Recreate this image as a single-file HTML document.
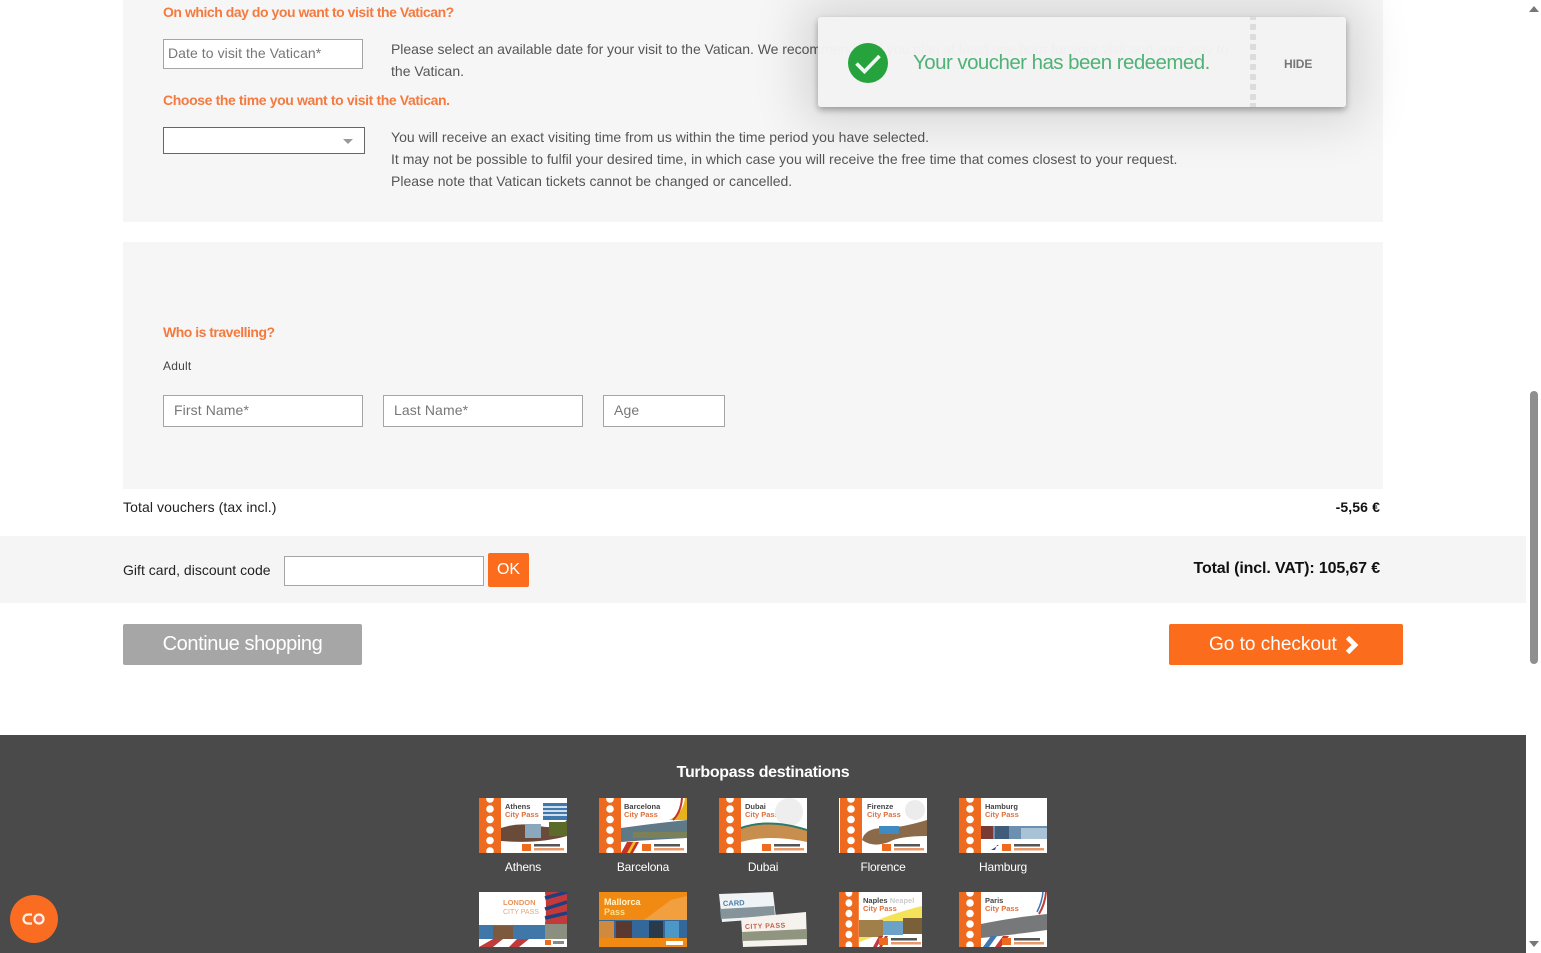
<!DOCTYPE html>
<html lang="en">
<head>
<meta charset="utf-8">
<title>Cart</title>
<style>
html,body{margin:0;padding:0;width:1541px;height:953px;overflow:hidden;background:#fff}
body{position:relative;font-family:"Liberation Sans",sans-serif;font-size:14px;color:#555}
.a{position:absolute;white-space:nowrap}
.panel{position:absolute;left:123px;width:1260px;background:#f6f6f6}
.h{font-weight:bold;color:#f47a3f;font-size:14px;letter-spacing:-.42px;line-height:16px;left:163px}
.t{left:391px;font-size:14px;letter-spacing:.01px;line-height:18px;color:#555}
.inp{position:absolute;box-sizing:border-box;background:#fff;border:1px solid #a5a5a5;color:#777;white-space:nowrap;letter-spacing:.1px}
.btn{position:absolute;box-sizing:border-box;border-radius:2px;color:#fff;text-align:center;white-space:nowrap}
.th{position:absolute;width:88px;height:55px;background:#fff;overflow:hidden}
.th svg{position:absolute;left:0;top:0;width:88px;height:55px}
.cap{position:absolute;width:120px;text-align:center;color:#fff;font-size:12px;line-height:14px;letter-spacing:-.2px}
</style>
</head>
<body>
<div class="panel" style="top:0;height:222px"></div>
<div class="panel" style="top:242px;height:247px"></div>

<div class="a h" style="top:4px;letter-spacing:-.46px">On which day do you want to visit the Vatican?</div>
<div class="inp" style="left:163px;top:39px;width:200px;height:30px;padding:4px 4px;line-height:18px;letter-spacing:.07px">Date to visit the Vatican*</div>
<div class="a t" style="top:40px;letter-spacing:-.03px">Please select an available date for your visit to the Vatican. We recommend that you plan at least one hour for your visit and your way to</div>
<div class="a t" style="top:62px">the Vatican.</div>

<div class="a h" style="top:92px;letter-spacing:-.38px">Choose the time you want to visit the Vatican.</div>
<div class="inp" style="left:163px;top:127px;width:202px;height:27px;border-color:#666"></div>
<svg class="a" style="left:343px;top:139px" width="10" height="6"><path d="M0 0H10L5 5Z" fill="#999"/></svg>
<div class="a t" style="top:128px">You will receive an exact visiting time from us within the time period you have selected.</div>
<div class="a t" style="top:150px">It may not be possible to fulfil your desired time, in which case you will receive the free time that comes closest to your request.</div>
<div class="a t" style="top:172px">Please note that Vatican tickets cannot be changed or cancelled.</div>

<div class="a h" style="top:324px;letter-spacing:-.5px">Who is travelling?</div>
<div class="a" style="left:163px;top:359px;font-size:12px;line-height:15px;color:#444;letter-spacing:.2px">Adult</div>
<div class="inp" style="left:163px;top:395px;width:200px;height:32px;padding:5px 10px;line-height:18px">First Name*</div>
<div class="inp" style="left:383px;top:395px;width:200px;height:32px;padding:5px 10px;line-height:18px">Last Name*</div>
<div class="inp" style="left:603px;top:395px;width:122px;height:32px;padding:5px 10px;line-height:18px">Age</div>

<div class="a" style="left:123px;top:498px;line-height:18px;color:#222;letter-spacing:.1px">Total vouchers (tax incl.)</div>
<div class="a" style="right:161px;top:498px;line-height:18px;color:#111;font-weight:bold;letter-spacing:.12px">-5,56 €</div>

<div class="a" style="left:0;top:536px;width:1526px;height:67px;background:#f5f5f5"></div>
<div class="a" style="left:123px;top:561px;line-height:18px;color:#222;letter-spacing:.02px">Gift card, discount code</div>
<div class="inp" style="left:284px;top:556px;width:200px;height:30px"></div>
<div class="btn" style="left:488px;top:553px;width:41px;height:34px;background:#fb6c1c;font-size:16px;line-height:34px">OK</div>
<div class="a" style="right:161px;top:559px;font-size:16px;line-height:20px;font-weight:bold;color:#111;letter-spacing:-.14px">Total (incl. VAT): 105,67 €</div>

<div class="btn" style="left:123px;top:624px;width:239px;height:41px;background:#a6a6a6;font-size:20px;line-height:41px;letter-spacing:-.42px">Continue shopping</div>
<div class="btn" style="left:1169px;top:624px;width:234px;height:41px;background:#fb6c1c;font-size:19px;line-height:41px;letter-spacing:0;text-align:left;padding-left:40px">Go to checkout</div>
<svg class="a" style="left:1345px;top:636px" width="14" height="18"><path d="M2.500 1.500 10 9 2.500 16.500" fill="none" stroke="#fff" stroke-width="4.800"/></svg>

<!-- footer -->
<div class="a" style="left:0;top:735px;width:1526px;height:218px;background:#4a4a4a"></div>
<div class="a" style="left:0;top:763px;width:1526px;text-align:center;color:#fff;font-weight:bold;font-size:16px;line-height:19px;letter-spacing:-.3px">Turbopass destinations</div>

<svg width="0" height="0" style="position:absolute">
<defs>
<g id="strip">
<rect width="22" height="55" fill="#ee6a1f"/>
<g fill="#fff"><circle cx="11" cy="1" r="3.800"/><circle cx="11" cy="11" r="3.800"/><circle cx="11" cy="21.500" r="3.800"/><circle cx="11" cy="32" r="3.800"/><circle cx="11" cy="42.500" r="3.800"/><circle cx="11" cy="53" r="3.800"/></g>
</g>
<g id="logo"><rect x="43" y="46" width="9" height="7" fill="#ee6a1f"/><rect x="55" y="46" width="26" height="2.500" fill="#555"/><rect x="55" y="50" width="30" height="2.500" fill="#e89a6a"/></g>
</defs>
</svg>

<!-- row 1 -->
<div class="th" style="left:479px;top:798px"><svg viewBox="0 0 88 55"><use href="#strip"/>
<text x="26" y="11" font-size="7.500" font-weight="bold" fill="#444">Athens</text><text x="26" y="19" font-size="7.500" font-weight="bold" fill="#e0703a">City Pass</text>
<rect x="64" y="5" width="24" height="17" fill="#3f78ad"/><path d="M64 9H88M64 13H88M64 17H88" stroke="#fff" stroke-width="1.500"/>
<path d="M22 30Q40 24 60 28T88 22V38Q60 46 22 43Z" fill="#6a4a38"/><rect x="46" y="26" width="16" height="14" fill="#8aa7bd"/><rect x="70" y="24" width="18" height="14" fill="#5d6b2a"/>
<use href="#logo"/></svg></div>
<div class="th" style="left:599px;top:798px"><svg viewBox="0 0 88 55"><use href="#strip"/>
<text x="25" y="11" font-size="7.500" font-weight="bold" fill="#444">Barcelona</text><text x="25" y="19" font-size="7.500" font-weight="bold" fill="#e0703a">City Pass</text>
<path d="M70 22Q84 16 86 0H88V22Z" fill="#e8b21c"/><path d="M74 22Q82 14 83 0" stroke="#c8322a" stroke-width="2" fill="none"/>
<path d="M22 30Q50 26 88 22V40Q50 42 22 44Z" fill="#5f7a86"/><path d="M34 34H88V40H34Z" fill="#7c8058"/>
<path d="M22 55 28 44H34L28 55ZM28 55 34 44H40L34 55Z" fill="#c8322a"/><path d="M28 55 34 44H37L31 55Z" fill="#f0c01c"/>
<use href="#logo"/></svg></div>
<div class="th" style="left:719px;top:798px"><svg viewBox="0 0 88 55"><use href="#strip"/>
<text x="26" y="11" font-size="7.500" font-weight="bold" fill="#444">Dubai</text><text x="26" y="19" font-size="7.500" font-weight="bold" fill="#e0703a">City Pass</text>
<circle cx="70" cy="14" r="14" fill="#eee"/>
<path d="M22 30Q50 20 88 32V44Q50 36 22 44Z" fill="#c88e4e"/><path d="M22 30Q50 20 88 32" stroke="#2e7a6a" stroke-width="2" fill="none"/>
<use href="#logo"/></svg></div>
<div class="th" style="left:839px;top:798px"><svg viewBox="0 0 88 55"><use href="#strip" transform="translate(1,0)"/>
<text x="28" y="11" font-size="7.500" font-weight="bold" fill="#444">Firenze</text><text x="28" y="19" font-size="7.500" font-weight="bold" fill="#e0703a">City Pass</text>
<circle cx="76" cy="12" r="10" fill="#ececec"/>
<path d="M23 42Q26 30 44 30T88 22V38Q60 38 50 44Q34 50 23 42Z" fill="#8a6a48"/><path d="M40 28H60V36H40Z" fill="#3f8ac0"/>
<use href="#logo"/></svg></div>
<div class="th" style="left:959px;top:798px"><svg viewBox="0 0 88 55"><use href="#strip"/>
<text x="26" y="11" font-size="7.500" font-weight="bold" fill="#444">Hamburg</text><text x="26" y="19" font-size="7.500" font-weight="bold" fill="#e0703a">City Pass</text>
<rect x="22" y="28" width="66" height="13" fill="#6d8fb0"/><rect x="22" y="28" width="12" height="13" fill="#7a3a34"/><rect x="36" y="28" width="14" height="13" fill="#3f5d7a"/><rect x="62" y="30" width="26" height="11" fill="#a8c3d6"/>
<path d="M32 52 40 47H38L36 52Z" fill="#334a80"/>
<use href="#logo"/></svg></div>

<div class="cap" style="left:463px;top:860px">Athens</div>
<div class="cap" style="left:583px;top:860px">Barcelona</div>
<div class="cap" style="left:703px;top:860px">Dubai</div>
<div class="cap" style="left:823px;top:860px">Florence</div>
<div class="cap" style="left:943px;top:860px">Hamburg</div>

<!-- row 2 -->
<div class="th" style="left:479px;top:892px"><svg viewBox="0 0 88 55">
<rect width="88" height="55" fill="#fff"/><path d="M66 0H88V32H66Q68 16 66 0Z" fill="#c23a3a"/><path d="M66 6 88 0M66 17 88 10M66 26 88 21" stroke="#1f3f80" stroke-width="3.500" fill="none"/>
<text x="24" y="13" font-size="7.500" font-weight="bold" fill="#e8935c">LONDON</text><text x="24" y="22" font-size="7" fill="#e8a57a">CITY PASS</text>
<rect x="0" y="33" width="66" height="14" fill="#3f78a8"/><rect x="14" y="34" width="20" height="13" fill="#7d5a3e"/><rect x="66" y="32" width="22" height="15" fill="#8a8f80"/>
<path d="M0 55 14 47H24L14 55ZM30 55 38 47H50L40 55Z" fill="#c23a3a"/>
<rect x="66" y="48" width="6" height="5" fill="#ee6a1f"/><rect x="74" y="49" width="11" height="3" fill="#888"/></svg></div>
<div class="th" style="left:599px;top:892px"><svg viewBox="0 0 88 55">
<rect width="88" height="55" fill="#f08a12"/><path d="M45 28 72 8 88 4V28Z" fill="#f29f3f"/>
<text x="5" y="13" font-size="9" font-weight="bold" fill="#fff5cc">Mallorca</text><text x="5" y="23" font-size="9" font-weight="bold" fill="#ffe08a">Pass</text>
<rect y="28" width="88" height="18" fill="#35689a"/><rect x="17" y="29" width="16" height="17" fill="#5a3a30"/><rect x="50" y="29" width="14" height="17" fill="#2a3a4a"/><rect x="66" y="29" width="14" height="17" fill="#4a97c8"/><rect y="29" width="15" height="17" fill="#d08a40"/>
<rect x="67" y="49" width="17" height="4" fill="#fff"/></svg></div>
<div class="th" style="left:719px;top:892px;background:transparent"><svg viewBox="0 0 88 55">
<path d="M0 2 54 0 57 26 3 30Z" fill="#f0f3f5"/><path d="M1 17 55 14 56 24 2 27Z" fill="#84949a"/>
<text x="4" y="14" font-size="7.500" font-weight="bold" fill="#4a7ea8" transform="rotate(-2 4 14)">CARD</text>
<path d="M22 26 87 20 88 53 24 55Z" fill="#f6f3ee"/><path d="M23 40 88 37 88 47 24 49Z" fill="#8f957f"/>
<text x="26" y="37" font-size="7" font-weight="bold" fill="#c4634a" letter-spacing=".5" transform="rotate(-2 26 37)">CITY PASS</text></svg></div>
<div class="th" style="left:839px;top:892px;width:83px;"><svg viewBox="0 0 88 55" style="width:88px"><use href="#strip" transform="scale(.9,1)"/>
<text x="24" y="11" font-size="7.500" font-weight="bold" fill="#444">Naples <tspan fill="#ccc">Neapel</tspan></text><text x="24" y="19" font-size="7.500" font-weight="bold" fill="#e0703a">City Pass</text>
<path d="M20 36Q50 22 83 14V28L20 50Z" fill="#f4e25a"/><rect x="20" y="28" width="24" height="17" fill="#a08048"/><rect x="64" y="26" width="20" height="16" fill="#7a6038"/><rect x="44" y="29" width="20" height="14" fill="#6ca2c8"/>
<path d="M34 55 40 44H44L38 55ZM40 55 46 44H49L43 55Z" fill="#c23a3a"/>
<use href="#logo" transform="translate(-3,0)"/></svg></div>
<div class="th" style="left:959px;top:892px"><svg viewBox="0 0 88 55"><use href="#strip"/>
<text x="26" y="11" font-size="7.500" font-weight="bold" fill="#444">Paris</text><text x="26" y="19" font-size="7.500" font-weight="bold" fill="#e0703a">City Pass</text>
<path d="M80 22Q86 12 87 0" stroke="#c23a3a" stroke-width="2" fill="none"/><path d="M78 20Q83 10 84 0" stroke="#3f78b0" stroke-width="1.500" fill="none"/>
<path d="M22 32Q50 26 88 22V38Q60 42 22 46Z" fill="#76787a"/>
<path d="M24 55 32 44H38L30 55Z" fill="#3f78b0"/><path d="M36 55 44 44H50L42 55Z" fill="#c23a3a"/>
<use href="#logo"/></svg></div>

<!-- toast -->
<div class="a" style="left:818px;top:17px;width:528px;height:90px;background:rgba(243,243,243,.98);border-radius:3px;box-shadow:0 0 50px 16px rgba(0,0,0,.13),0 3px 7px rgba(0,0,0,.32)"></div>
<svg class="a" style="left:848px;top:43px" width="40" height="40"><circle cx="20" cy="20" r="20" fill="#26a33c"/><path d="M8.500 20.500 16.500 28.500 31.500 13" fill="none" stroke="#f4f4f4" stroke-width="3.600"/></svg>
<div class="a" style="left:913px;top:50px;font-size:20.500px;line-height:26px;color:#4fb276;letter-spacing:-.55px">Your voucher has been redeemed.</div>
<div class="a" style="left:1284px;top:57px;font-size:12px;line-height:15px;font-weight:bold;color:#777;letter-spacing:-.1px">HIDE</div>
<svg class="a" style="left:1250px;top:17px" width="7" height="90"><g fill="#dcdcdc"><rect width="6" height="3" y="0"/><rect width="6" height="6" y="7" rx="1"/><rect width="6" height="6" y="17" rx="1"/><rect width="6" height="6" y="27" rx="1"/><rect width="6" height="6" y="37" rx="1"/><rect width="6" height="6" y="47" rx="1"/><rect width="6" height="6" y="57" rx="1"/><rect width="6" height="6" y="67" rx="1"/><rect width="6" height="6" y="77" rx="1"/><rect width="6" height="4" y="86"/></g></svg>

<!-- scrollbar -->
<div class="a" style="left:1526px;top:0;width:15px;height:953px;background:#fff"></div>
<div class="a" style="left:1530px;top:391px;width:8px;height:273px;background:#8f8f8f;border-radius:4px"></div>
<svg class="a" style="left:1529px;top:6px" width="10" height="6"><path d="M0 6H10L5 0Z" fill="#777"/></svg>
<svg class="a" style="left:1529px;top:941px" width="10" height="6"><path d="M0 0H10L5 6Z" fill="#777"/></svg>

<!-- chat bubble -->
<div class="a" style="left:10px;top:895px;width:48px;height:48px;border-radius:50%;background:#fb6c23"></div>
<svg class="a" style="left:21px;top:912px" width="26" height="14"><path d="M11 2.500H7a4.500 4.500 0 0 0 0 9h4" fill="none" stroke="#fff3e0" stroke-width="2.200"/><circle cx="18" cy="7" r="4.500" fill="#f0705a" stroke="#fff3e0" stroke-width="2.200"/></svg>
</body>
</html>
